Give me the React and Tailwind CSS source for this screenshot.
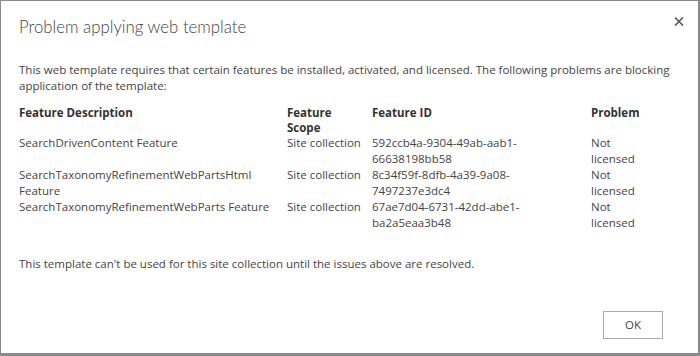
import React from 'react';

const rows = [
  {
    desc: ['SearchDrivenContent Feature'],
    scope: 'Site collection',
    id: ['592ccb4a-9304-49ab-aab1-', '66638198bb58'],
  },
  {
    desc: ['SearchTaxonomyRefinementWebPartsHtml', 'Feature'],
    scope: 'Site collection',
    id: ['8c34f59f-8dfb-4a39-9a08-', '7497237e3dc4'],
  },
  {
    desc: ['SearchTaxonomyRefinementWebParts Feature'],
    scope: 'Site collection',
    id: ['67ae7d04-6731-42dd-abe1-', 'ba2a5eaa3b48'],
  },
];

function Lines({ items }) {
  return (
    <div>
      {items.map((t, i) => (
        <div key={i}>{t}</div>
      ))}
    </div>
  );
}

export default function App() {
  return (
    <div
      className="w-[700px] h-[356px] bg-white border-[#8a8a8a] border-l border-t border-r-2 border-b-[3px] flex flex-col text-[#444444]"
      style={{ fontFamily: '"Open Sans", "Noto Sans", Arial, sans-serif' }}
    >
      {/* Title bar */}
      <div className="flex items-start justify-between pl-[18px] pr-[11px] pt-[12px]">
        <h1
          className="text-[16.8px] leading-[28px] font-light text-[#444444]"
          style={{ fontFamily: 'Lato, "Open Sans", sans-serif' }}
        >
          Problem applying web template
        </h1>
        <button className="w-[16px] h-[16px] flex items-center justify-center">
          <svg width="10" height="9" viewBox="0 0 10 9">
            <path d="M1 0.5 L9 8.5 M9 0.5 L1 8.5" stroke="#555" strokeWidth="1.6" />
          </svg>
        </button>
      </div>

      {/* Body */}
      <div className="pl-[18px] pr-[20px] pt-[21px] text-[11.5px] leading-[16px]">
        <p>
          This web template requires that certain features be installed, activated, and licensed. The following problems are blocking
          application of the template:
        </p>

        <div className="grid grid-cols-[268px_85px_219px_1fr] mt-[11px]">
          <div className="font-bold text-[#333] leading-[15px]">Feature Description</div>
          <div className="font-bold text-[#333] leading-[15px]">
            <div>Feature</div>
            <div>Scope</div>
          </div>
          <div className="font-bold text-[#333] leading-[15px]">Feature ID</div>
          <div className="font-bold text-[#333] leading-[15px]">Problem</div>

          {rows.map((r, i) => (
            <React.Fragment key={i}>
              <Lines items={r.desc} />
              <div>{r.scope}</div>
              <Lines items={r.id} />
              <Lines items={['Not', 'licensed']} />
            </React.Fragment>
          ))}
        </div>

        <p className="mt-[25px]">
          This template can't be used for this site collection until the issues above are resolved.
        </p>
      </div>

      {/* Footer */}
      <div className="mt-auto flex justify-end pr-[35px] pb-[14px]">
        <button className="w-[60px] h-[28px] border border-[#ababab] bg-white text-[11.5px] text-[#444]">
          OK
        </button>
      </div>
    </div>
  );
}
